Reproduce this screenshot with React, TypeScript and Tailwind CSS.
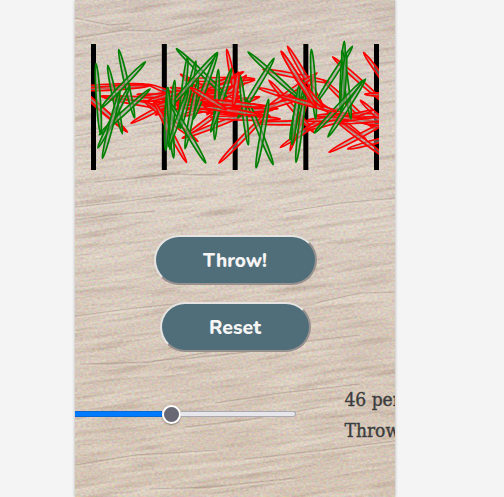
type Needle = [number, number, number, number];

const RED: Needle[] = [
  [55, 262, 266, 254], [58, 270, 270, 257], [263, 252, 460, 330], [122, 288, 332, 328],
  [40, 255, 203, 397], [35, 245, 196, 390], [212, 370, 400, 272], [125, 290, 336, 302],
  [230, 283, 440, 303], [240, 292, 448, 270], [258, 305, 450, 250], [262, 318, 470, 280],
  [285, 345, 480, 270], [270, 325, 470, 265], [250, 300, 415, 425], [280, 300, 380, 488],
  [365, 415, 560, 340], [375, 410, 545, 285], [360, 222, 540, 330], [372, 240, 585, 237],
  [330, 262, 536, 310], [552, 215, 360, 308], [585, 240, 377, 278], [500, 147, 541, 350],
  [355, 350, 560, 293], [400, 328, 610, 350], [450, 352, 662, 357], [440, 267, 632, 350],
  [460, 305, 655, 326], [476, 490, 625, 335], [590, 370, 800, 367], [608, 208, 812, 248],
  [592, 263, 790, 322], [626, 240, 762, 398], [663, 153, 770, 325], [682, 138, 790, 322],
  [772, 218, 600, 340], [660, 443, 835, 325], [690, 453, 760, 235], [790, 240, 948, 390],
  [817, 170, 975, 310], [910, 157, 1030, 320], [745, 310, 957, 380], [745, 285, 920, 420],
  [765, 347, 975, 345], [900, 300, 1040, 430], [913, 283, 1100, 287], [806, 457, 990, 360],
  [862, 447, 1040, 400], [810, 345, 985, 478], [738, 390, 940, 330], [740, 362, 900, 350],
  [810, 345, 1000, 380], [840, 370, 1030, 350], [420, 300, 610, 320], [380, 330, 555, 250],
  [350, 280, 550, 320], [440, 345, 560, 225], [545, 345, 735, 290], [350, 295, 525, 230],
  [345, 330, 540, 275], [430, 310, 590, 345], [380, 300, 480, 280], [460, 320, 560, 335],
  [340, 300, 545, 345], [365, 285, 565, 335], [350, 318, 550, 325], [440, 330, 640, 330],
  [390, 265, 560, 345], [440, 340, 600, 290],
];

const GREEN: Needle[] = [
  [108, 190, 122, 403], [143, 195, 187, 402], [176, 148, 224, 355], [257, 185, 122, 325],
  [271, 266, 117, 405], [113, 445, 210, 257], [127, 476, 180, 272], [348, 145, 500, 290],
  [383, 170, 357, 385], [408, 182, 362, 386], [375, 447, 415, 238], [473, 157, 330, 320],
  [473, 157, 400, 358], [475, 208, 464, 420], [452, 397, 515, 205], [317, 452, 324, 262],
  [341, 475, 322, 262], [344, 240, 330, 450], [438, 490, 330, 308], [325, 440, 385, 270],
  [563, 155, 722, 298], [643, 174, 533, 355], [540, 225, 565, 436], [640, 495, 560, 298],
  [588, 505, 626, 297], [708, 488, 735, 275], [690, 420, 730, 240], [696, 435, 718, 255],
  [754, 147, 767, 358], [878, 138, 768, 308], [853, 123, 842, 335], [846, 150, 873, 358],
  [858, 160, 845, 330], [917, 236, 803, 412], [910, 240, 762, 400],
];

/* Red needles that landed on top of the green ones. */
const TOP_RED: Needle[] = [
  [420, 300, 610, 320], [430, 320, 600, 345], [390, 262, 500, 330], [520, 320, 535, 215],
  [650, 285, 830, 335], [700, 225, 790, 325], [663, 153, 770, 325],
];

const BARS = [93, 305.5, 518, 730, 942];

function Needles({ items, stroke }: { items: Needle[]; stroke: string }) {
  return (
    <g stroke={stroke} fill="rgba(160,160,150,0.55)" strokeWidth="5">
      {items.map(([x1, y1, x2, y2], i) => {
        const len = Math.hypot(x2 - x1, y2 - y1);
        const angle = (Math.atan2(y2 - y1, x2 - x1) * 180) / Math.PI;
        return (
          <ellipse
            key={i}
            rx={len / 2 - 1}
            ry="6"
            transform={`translate(${(x1 + x2) / 2} ${(y1 + y2) / 2}) rotate(${angle})`}
          />
        );
      })}
    </g>
  );
}

function Board() {
  return (
    <svg className="ml-4 block h-[132px] w-[288px]" viewBox="93 120 864 396">
      {BARS.map((x) => (
        <rect key={x} x={x} y="132" width="15" height="378" fill="#000" />
      ))}
      <Needles items={RED} stroke="#ff0000" />
      <Needles items={GREEN} stroke="#008000" />
      <Needles items={TOP_RED} stroke="#ff0000" />
    </svg>
  );
}

const CRACKS = [
  "M0 38 L50 30 L82 31 L130 20", "M40 64 L100 52 L160 47", "M20 182 L95 174 L150 175",
  "M210 212 L265 203 L320 198", "M0 207 L45 202 L98 195", "M0 220 L35 215 L80 211",
  "M0 316 L60 308 L110 303", "M5 364 L75 362 L140 351", "M78 361 L135 356 L190 350",
  "M140 403 L205 393 L285 384", "M110 427 L170 420 L252 406", "M0 465 L60 455 L142 450",
  "M170 459 L240 451 L320 441", "M75 489 L135 487 L220 478", "M0 136 L55 126 L90 120",
  "M240 303 L285 293 L320 292", "M135 348 L205 344 L285 335", "M0 18 L35 25 L55 23",
];

function Wood() {
  return (
    <svg className="absolute inset-0 h-full w-full" viewBox="0 0 320 497" preserveAspectRatio="none">
      <defs>
        <linearGradient id="tone" x1="0" y1="0" x2="0" y2="1">
          <stop offset="0" stopColor="#d6c8bf" />
          <stop offset=".2" stopColor="#e0d5cb" />
          <stop offset=".45" stopColor="#e0d4c9" />
          <stop offset=".62" stopColor="#dccdc0" />
          <stop offset="1" stopColor="#dacaba" />
        </linearGradient>
        <filter id="light" x="0" y="0" width="1" height="1" colorInterpolationFilters="sRGB">
          <feTurbulence type="fractalNoise" baseFrequency=".012 .16" numOctaves="4" seed="8" />
          <feColorMatrix values="0 0 0 0 .94  0 0 0 0 .91  0 0 0 0 .86  3.2 0 0 0 -1.4" />
        </filter>
        <filter id="dark" x="0" y="0" width="1" height="1" colorInterpolationFilters="sRGB">
          <feTurbulence type="fractalNoise" baseFrequency=".016 .22" numOctaves="4" seed="21" />
          <feColorMatrix values="0 0 0 0 .6  0 0 0 0 .5  0 0 0 0 .44  2.8 0 0 0 -1.4" />
        </filter>
        <filter id="grain" x="0" y="0" width="1" height="1" colorInterpolationFilters="sRGB">
          <feTurbulence type="fractalNoise" baseFrequency=".35 .5" numOctaves="3" seed="4" />
          <feColorMatrix values="1.4 0 0 0 0  0 1.4 0 0 -.06  0 0 1.4 0 -.12  0 0 0 0 .15" />
        </filter>
      </defs>
      <rect width="320" height="497" fill="url(#tone)" />
      <g transform="rotate(-8 160 248)">
        <rect x="-60" y="-40" width="440" height="580" filter="url(#light)" opacity=".55" />
        <rect x="-60" y="-40" width="440" height="580" filter="url(#dark)" opacity=".36" />
      </g>
      <rect width="320" height="497" filter="url(#grain)" />
      <g fill="none" stroke="#8d7b70" strokeWidth=".8" opacity=".45">
        {CRACKS.map((d) => (
          <path key={d} d={d} />
        ))}
      </g>
      <g fill="none" stroke="#eee6dc" strokeWidth="1.2" opacity=".4" transform="translate(0 2)">
        {CRACKS.map((d) => (
          <path key={d} d={d} />
        ))}
      </g>
    </svg>
  );
}

const BUTTON =
  "flex h-[50px] items-center justify-center rounded-full border-2 border-t-[#e6e4e2] border-l-[#e6e4e2] border-r-[#96918f] border-b-[#96918f] bg-[#506e79] text-[20px] leading-none font-extrabold text-[#f5f5f5] font-['Nunito','Open_Sans',sans-serif]";

export default function App() {
  return (
    <div className="flex h-[497px] w-full justify-center overflow-hidden bg-[#f4f4f4] pr-[34px]">
      <main className="relative h-full w-[320px] shrink-0 overflow-hidden shadow-[0_0_3px_rgba(0,0,0,0.3)]">
        <Wood />
        <div className="relative flex h-full flex-col pt-10">
          <Board />
          <div className="mt-[62.5px] flex flex-col items-center gap-[17px]">
            <button className={BUTTON + " w-[163px]"}>
              <svg className="h-6 w-[66px] overflow-visible" fill="currentColor">
                <text x="1" y="19" textLength="64" lengthAdjust="spacingAndGlyphs">Throw!</text>
              </svg>
            </button>
            <button className={BUTTON + " w-[151px]"}>
              <svg className="h-6 w-[52px] overflow-visible" fill="currentColor">
                <text x="0" y="19" textLength="52" lengthAdjust="spacingAndGlyphs">Reset</text>
              </svg>
            </button>
          </div>
          <div className="mt-8 flex w-[420px] items-start">
            <div className="mt-[20.5px] flex h-5 w-[221px] shrink-0 items-center">
              <div className="h-[6px] w-[87px] border-y border-[#0869d5] bg-[#007aff]" />
              <div className="size-[19px] shrink-0 rounded-full border-2 border-white bg-[#686774] shadow-[0_1px_2px_rgba(0,0,0,0.35)]" />
              <div className="h-[6px] flex-1 rounded-r-full border border-l-0 border-[#aaa8b0] bg-[#e7e6eb]" />
            </div>
            <p className="ml-[48.5px] text-[19px] leading-[31px] whitespace-nowrap text-[#3b3c3c] font-['Roboto_Slab','DejaVu_Serif_Condensed','DejaVu_Serif',serif] [font-stretch:condensed] [-webkit-text-stroke:0.35px_#3b3c3c]">
              46 per
              <br />
              Throw
            </p>
          </div>
        </div>
      </main>
    </div>
  );
}
